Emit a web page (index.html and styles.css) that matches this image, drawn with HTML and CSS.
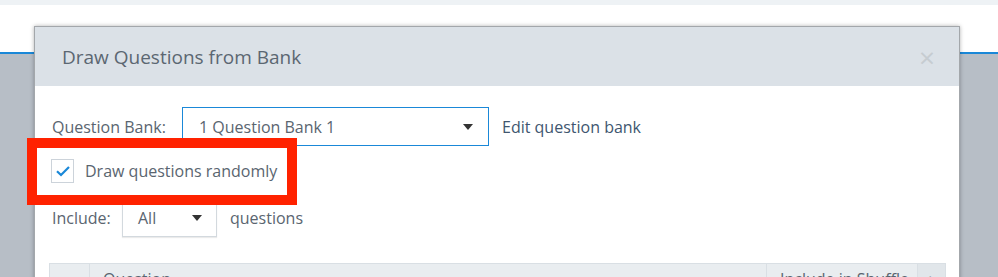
FILE: index.html
```html
<!DOCTYPE html>
<html lang="en">
<head>
    <meta charset="UTF-8">
    <title>Draw Questions from Bank</title>
    <link rel="stylesheet" href="styles.css">
</head>
<body>
    <div class="topbar"></div>
    <div class="pagehead"></div>
    <div class="backdrop"></div>

    <div class="modal">
        <div class="modal-header">
            <h2>Draw Questions from Bank</h2>
            <span class="close">&times;</span>
        </div>
        <div class="modal-body">
            <div class="row bank-row">
                <label class="lbl lbl-bank">Question Bank:</label>
                <div class="select select-bank">
                    <span>1 Question Bank 1</span>
                    <span class="caret"></span>
                </div>
                <a class="link" href="#">Edit question bank</a>
            </div>
            <div class="row check-row">
                <span class="checkbox">
                    <svg width="16" height="12" viewBox="0 0 16 12"><path d="M2 6.2 L6 10 L14 2" fill="none" stroke="#1a88d8" stroke-width="2.2"/></svg>
                </span>
                <span class="check-text">Draw questions randomly</span>
            </div>
            <div class="row include-row">
                <label class="lbl lbl-include">Include:</label>
                <div class="select select-include">
                    <span>All</span>
                    <span class="caret"></span>
                </div>
                <span class="after">questions</span>
            </div>
            <div class="table-head">
                <div class="th th-num"></div>
                <div class="th th-question">Question</div>
                <div class="th th-shuffle">Include in Shuffle</div>
                <div class="th th-sort">&uarr;</div>
            </div>
        </div>
    </div>

    <div class="highlight"></div>
</body>
</html>
```

FILE: styles.css
```css
html, body {
    margin: 0;
    padding: 0;
    height: 277px;
    overflow: hidden;
}
body {
    font-family: "Open Sans", "Noto Sans", Arial, sans-serif;
    font-size: 16px;
    color: #5a6570;
    background: #b7bec6;
}
.topbar {
    height: 5px;
    background: #eef2f5;
}
.pagehead {
    height: 47px;
    background: #fff;
    border-bottom: 2px solid #1a88d8;
}
.backdrop {
    height: 223px;
    background: #b7bec6;
}
.modal {
    position: absolute;
    left: 34px;
    top: 26px;
    width: 924px;
    height: 260px;
    background: #fff;
    border: 1px solid #a3a7ab;
    box-shadow: 0 0 4px rgba(0,0,0,0.3);
}
.modal-header {
    height: 59px;
    background: #dbe1e7;
    display: flex;
    align-items: center;
    justify-content: space-between;
    padding: 0 24px 0 27px;
}
.modal-header h2 {
    margin: 0;
    font-size: 19px;
    font-weight: normal;
    color: #5b6772;
}
.close {
    font-size: 28px;
    color: #c6ccd1;
    line-height: 1;
}
.modal-body {
    padding: 21px 13px 0 14px;
}
.row {
    display: flex;
    align-items: center;
}
.bank-row {
    height: 39px;
}
.lbl {
    padding-left: 3px;
}
.lbl-bank {
    width: 130px;
}
.lbl-include {
    width: 70px;
}
.select {
    box-sizing: border-box;
    display: flex;
    align-items: center;
    justify-content: space-between;
    background: #fff;
}
.select-bank {
    width: 307px;
    height: 39px;
    border: 1px solid #1a88d8;
    padding: 0 15px 0 16px;
}
.select-include {
    width: 95px;
    height: 38px;
    border: 1px solid #d3d9de;
    box-shadow: 0 1px 1px rgba(0,0,0,0.08);
    padding: 0 14px 0 15px;
}
.caret {
    width: 0;
    height: 0;
    border-left: 5px solid transparent;
    border-right: 5px solid transparent;
    border-top: 6px solid #333;
}
.link {
    margin-left: 13px;
    color: #40566f;
    text-decoration: none;
}
.check-row {
    height: 34px;
    margin-top: 8px;
    padding-left: 2px;
}
.checkbox {
    box-sizing: border-box;
    width: 23px;
    height: 24px;
    border: 1px solid #ccd3da;
    display: flex;
    align-items: center;
    justify-content: center;
}
.check-text {
    margin-left: 11px;
}
.include-row {
    height: 38px;
    margin-top: 11px;
}
.after {
    margin-left: 13px;
}
.table-head {
    display: flex;
    margin-top: 26px;
    height: 36px;
    background: #e9edf0;
    border: 1px solid #d9dfe4;
    color: #5a6570;
}
.th {
    padding: 4px 0 0 13px;
    border-right: 1px solid #d9dfe4;
    line-height: 22px;
}
.th-num {
    width: 26px;
}
.th-question {
    width: 663px;
}
.th-shuffle {
    width: 137px;
    white-space: nowrap;
    overflow: hidden;
}
.th-sort {
    flex: 1;
    border-right: none;
    background: #e1e6ea;
    color: #9aa3ab;
    padding-left: 8px;
}
.highlight {
    position: absolute;
    left: 27px;
    top: 138px;
    width: 250px;
    height: 47px;
    border: 10px solid #ff2200;
}
```
